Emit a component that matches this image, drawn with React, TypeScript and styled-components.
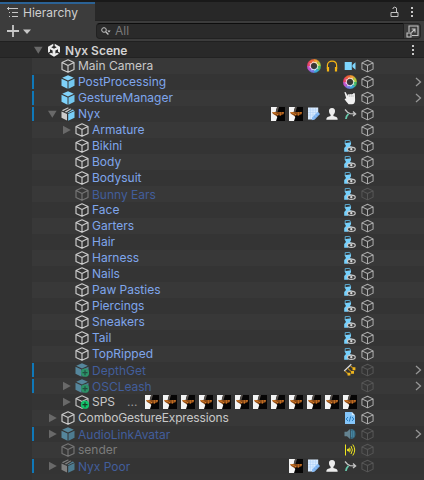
import React from "react";
import styled, { createGlobalStyle } from "styled-components";

const Global = createGlobalStyle`
  * { box-sizing: border-box; }
  html, body { margin: 0; background: #383838; }
  body { font-family: Inter, "Liberation Sans", sans-serif; overflow: hidden; }
  svg { display: block; flex: none; }
`;

const Panel = styled.div`
  width: 424px;
  height: 480px;
  display: flex;
  flex-direction: column;
  background: #383838;
  overflow: hidden;
`;

const TabBar = styled.div`
  height: 21px;
  flex: none;
  display: flex;
  align-items: flex-end;
  background: linear-gradient(#191919 2px, #282828 2px, #282828 20px, #232323 20px);
`;

const Tab = styled.div`
  width: 95px;
  height: 19px;
  display: flex;
  align-items: center;
  gap: 4px;
  padding: 1px 0 0 7px;
  border-top: 2px solid #2b6295;
  background: #3c3c3c;
  color: #cfcfcf;
  font-size: 12px;
  line-height: 16px;
`;

const TabTools = styled.div`
  margin-left: auto;
  height: 19px;
  display: flex;
  align-items: center;
  gap: 11px;
  padding-right: 10px;
`;

const Toolbar = styled.div`
  height: 20px;
  flex: none;
  display: flex;
  align-items: center;
  padding: 0 3px 0 7px;
  background: #3c3c3c;
`;

const AddButton = styled.div`
  width: 89px;
  display: flex;
  align-items: center;
  gap: 4px;
`;

const Search = styled.div`
  flex: 1;
  height: 16px;
  display: flex;
  align-items: center;
  padding-left: 4px;
  border: 1px solid #212121;
  border-top-color: #0d0d0d;
  border-radius: 4px 0 0 4px;
  background: #2a2a2a;
  color: #7a7a7a;
  font-size: 12px;
  line-height: 14px;
`;

const SearchText = styled.span`
  margin-left: 4px;
`;

const PickerButton = styled.div`
  width: 17px;
  height: 16px;
  display: flex;
  align-items: center;
  justify-content: center;
  border: 1px solid #242424;
  border-left: 0;
  border-radius: 0 4px 4px 0;
  background: #3c3c3c;
`;

const SceneRow = styled.div`
  height: 17px;
  flex: none;
  display: flex;
  align-items: center;
  padding: 1px 9px 0 32px;
  border-top: 1px solid #202020;
  border-bottom: 1px solid #222;
  background: #292929;
`;

const SceneLogo = styled.svg`
  margin-left: 4px;
`;

const SceneTitle = styled.span`
  flex: 1;
  margin-left: 4px;
  color: #d2d2d2;
  font-size: 12px;
  font-weight: 600;
  line-height: 15px;
`;

const Tree = styled.div`
  flex: 1;
  padding-left: 32px;
  background: linear-gradient(90deg, #323232 32px, #353535 32px);
`;

const Row = styled.div<{ $even: boolean; $bar: boolean; $depth: number }>`
  height: 16px;
  display: flex;
  align-items: center;
  padding-left: ${(p) => 14 + p.$depth * 14}px;
  background-color: ${(p) => (p.$even ? "#383838" : "#343434")};
  background-image: ${(p) => (p.$bar ? "linear-gradient(#0f78b8, #0f78b8)" : "none")};
  background-size: 2px 14px;
  background-position: 0 1px;
  background-repeat: no-repeat;
`;

const Fold = styled.div`
  width: 15px;
  flex: none;
`;

const TONES = { normal: "#c8c8c8", prefab: "#7fa6ec", offPrefab: "#425e9c", off: "#7b7b7b" };
type Tone = keyof typeof TONES;

const Name = styled.span<{ $tone: Tone; $tight: boolean }>`
  flex: 1;
  min-width: 0;
  margin-left: 3px;
  padding-top: ${(p) => (p.$tone === "offPrefab" ? 2 : 0)}px;
  color: ${(p) => TONES[p.$tone]};
  font-size: 12px;
  letter-spacing: ${(p) => (p.$tight ? "-0.16px" : "0")};
  line-height: 16px;
  white-space: nowrap;
`;

const Dots = styled.span`
  margin-left: 12px;
  color: #999;
`;

const Components = styled.div`
  display: flex;
  align-items: center;
  gap: 4px;
  margin-right: 4px;
`;

const Trailing = styled.div`
  width: 63px;
  flex: none;
  display: flex;
  align-items: center;
  justify-content: space-between;
  padding-right: 2px;
`;

const Cube = ({ c = "#c4c4c4", w = 1.15, size = 14 }: { c?: string; w?: number; size?: number }) => (
  <svg width={size} height={14} viewBox="0 0 14 14" fill="none" stroke={c} strokeWidth={w} strokeLinejoin="round">
    <path d="M7 .8 13 3.6V10.4L7 13.3 1 10.4V3.6ZM1 3.6 7 6.5 13 3.6M7 6.5V13.3" />
  </svg>
);

const Plus = ({ off }: { off?: boolean }) => (
  <g>
    <circle cx="10" cy="9.7" r="4.1" fill={off ? "#2c9268" : "#12c36b"} />
    <path d="M7.5 9.7H12.5M10 7.2V12.2" stroke={off ? "#224e40" : "#173c28"} strokeWidth="1.2" />
  </g>
);

const Prefab = ({ off, plus }: { off?: boolean; plus?: boolean }) => (
  <svg width="14" height="14" viewBox="0 0 14 14">
    <path d="M7 .3 12.8 2.8 7 5.5 1.2 2.8Z" fill={off ? "#55869c" : "#82d3fa"} />
    <path d="M.5 3.7 6.5 6.5V13.7L.5 10.8Z" fill={off ? "#55869c" : "#7ed2fa"} />
    <path d="M7.5 6.5 13.5 3.7V10.8L7.5 13.7Z" fill={off ? "#4d7b90" : "#73c7ef"} />
    {plus && <Plus off={off} />}
  </svg>
);

const AddedCube = () => (
  <svg width="14" height="14" viewBox="0 0 14 14" fill="none">
    <path d="M7 .8 13 3.6V10.4L7 13.3 1 10.4V3.6ZM1 3.6 7 6.5 13 3.6" stroke="#c4c4c4" strokeWidth="1.15" strokeLinejoin="round" />
    <Plus />
  </svg>
);

const Variant = ({ off }: { off?: boolean }) => (
  <svg width="14" height="14" viewBox="0 0 14 14">
    <path d="M.5 4.4 6 7V13.5L.5 10.8Z" fill={off ? "#808080" : "#cbcbcb"} />
    <path d="M.8 3.3 6.8 .5 8 1 2.3 4ZM3.6 4.7 9.3 1.6 10.5 2.1 5.1 5.4Z" fill={off ? "#808080" : "#cbcbcb"} />
    <path d="M7.2 7 13.5 4V10.8L7.2 13.7Z" fill={off ? "#4d7b90" : "#78cef8"} />
    <path d="M6.3 5.9 11.6 2.5 13.3 3.2 7.1 6.2Z" fill={off ? "#55869c" : "#82d3fa"} />
  </svg>
);

const Arrow = ({ open }: { open?: boolean }) => (
  <svg width="11" height="14" viewBox="0 0 11 14">
    <path d={open ? "M2 3.7H10.6L6.3 10.8Z" : "M3 2.8 10.8 7 3 11.3Z"} fill="#696969" />
  </svg>
);

const Chevron = () => (
  <svg width="7" height="10" viewBox="0 0 7 10" fill="none" stroke="#969696" strokeWidth="1.3">
    <path d="M1 1 5.5 5 1 9" />
  </svg>
);

const Kebab = () => (
  <svg width="4" height="12" viewBox="0 0 4 12" fill="#c8c8c8">
    <path d="M1 1h2v2H1ZM1 5h2v2H1ZM1 9h2v2H1Z" />
  </svg>
);

const Script = () => (
  <svg width="14" height="14" viewBox="0 0 14 14">
    <path d="M0 0H14V14H0Z" fill="#060505" />
    <path d="M0 0H6.2L5 3.6 4.6 6 5 8.5 6.3 10 5 14H0Z" fill="#f4f4f4" />
    <path d="M6 0H8L6.5 5H4.8Z" fill="#55504c" />
    <path d="M1.2 5 13.2 5 12.6 7.3 10.6 8 9.5 8.7 7.5 8.2 5.5 8.9 3.4 7.8 1.8 6.8Z" fill="#8a4a17" />
    <path d="M1.8 5.6 5.5 6.4M5.8 7.6H7M8.8 6H10M11 5.9H12.6M9 7.8H10" stroke="#e2862d" strokeWidth="1" />
  </svg>
);

const WHEEL = ["#f0a030", "#b4c83c", "#45b96a", "#3aa9d8", "#7378e0", "#c255cf", "#ea4468", "#ee6338"];

const Wheel = () => (
  <svg width="14" height="14" viewBox="0 0 14 14">
    {WHEEL.map((c, i) => (
      <path key={c} d="M7 .2A6.8 6.8 0 0 1 11.9 2.2L9.3 4.7A3.2 3.2 0 0 0 7 3.8Z" fill={c} stroke={c} strokeWidth=".3" transform={`rotate(${i * 45} 7 7)`} />
    ))}
    {WHEEL.map((c, i) => (
      <path key={c} d="M5 3.8 10 3.2" stroke="#f2eeee" strokeWidth=".7" transform={`rotate(${i * 45} 7 7)`} />
    ))}
    <circle cx="7" cy="7" r="2.8" fill="#383838" />
  </svg>
);

const Headphones = () => (
  <svg width="14" height="14" viewBox="0 0 14 14" fill="none" stroke="#f4b414">
    <path d="M2.4 10V6.2C2.4 .7 11.6 .7 11.6 6.2V10" strokeWidth="1.2" />
    <path d="M3 8V12.5M11 8V12.5" strokeWidth="2.2" />
  </svg>
);

const Camera = () => (
  <svg width="14" height="14" viewBox="0 0 14 14" fill="#7fd6fd">
    <path d="M1.7 3H8.8V11H1.7ZM9.4 6 12.5 3.3V10.7L9.4 8Z" />
  </svg>
);

const Hand = () => (
  <svg width="14" height="14" viewBox="0 0 14 14">
    <path d="M1.4 1.3Q2.6 .7 3.1 1.9L4.6 5 4.7 3.6Q5.5 2.8 6.3 3.6 7.2 2.7 8.1 3.5 9 2.7 9.9 3.3L10.3 2.2Q11.4 1.6 11.9 2.7L12.1 9Q12 13.2 9 13.2H5.6L3.2 10.5 1.6 8.3Q2 7.3 3.3 7.6Z" fill="#f1f1f1" />
    <path d="M6.3 4V6M8.2 4V6M10 4V6" stroke="#999" strokeWidth=".5" />
  </svg>
);

const Note = () => (
  <svg width="14" height="14" viewBox="0 0 14 14">
    <path d="M1 .5H11.2V8L7 12.5H1Z" fill="#d9ebff" />
    <path d="M1 3H11M1 5.5H11M1 8H10M3.5 1V12M6 1V12M8.5 1V10" stroke="#a9cdf4" strokeWidth=".5" />
    <path d="M5.1 10.5 10.8 4.8 13 7 7.7 12.5 4.8 13.3Z" fill="#87baf3" />
    <path d="M7 9.3 9 11.2M9 7.3 11 9.2" stroke="#629ce0" strokeWidth=".6" />
  </svg>
);

const Person = () => (
  <svg width="14" height="14" viewBox="0 0 14 14" fill="#ececec">
    <path d="M7 1C9.2 1 10.2 2.4 10 4.5 9.8 6.2 9.1 7.1 8.4 7.8V9L11.4 10Q12.7 10.5 12.7 12.7H1.3Q1.3 10.5 2.6 10L5.6 9V7.8C4.9 7.1 4.2 6.2 4 4.5 3.8 2.4 4.8 1 7 1Z" />
  </svg>
);

const Bone = () => (
  <svg width="14" height="14" viewBox="0 0 14 14" fill="none">
    <path d="M2 2.5 4.5 5.3 7 6.6 12 6.9M10 4.6 12.6 6.9 10 9" stroke="#c4c4c4" strokeWidth="1.3" />
    <path d="M5.5 6.8Q3.4 8.5 2.9 12" stroke="#68c9ac" strokeWidth="1.7" />
  </svg>
);

const Mesh = () => (
  <svg width="14" height="14" viewBox="0 0 14 14">
    <path d="M2.2 4.2V1.6L6.7 1.4 7.6 3.4" stroke="#5fb3dc" strokeWidth=".9" fill="none" />
    <path d="M1.5 4.2 8 3.3 8 5.2 7 7 9 8 4.8 12.8H1.2V9L3 7Z" fill="#76d0fc" />
    <ellipse cx="8.3" cy="10.3" rx="3.9" ry="2.1" fill="#333" stroke="#c8c8c8" strokeWidth="1.2" />
    <circle cx="8.3" cy="10.1" r="1.2" fill="#dadada" />
  </svg>
);

const Constraint = () => (
  <svg width="14" height="14" viewBox="0 0 14 14" fill="none">
    <path d="M1.2 8 8.3 1.2" stroke="#ddd" strokeWidth="1.2" />
    <path d="M7.5 2.8 11.5 6.5M4.7 5.3 9.8 9.8M2 7.8 6.3 12" stroke="#bf8b16" strokeWidth="1.1" />
    <path d="M10 4.2H12.4V7.2H9.4ZM8.1 8H11V10.8H8ZM4.7 9.8H7.4V12.5H4.5Z" fill="#eeb51e" />
  </svg>
);

const CodeFile = () => (
  <svg width="14" height="14" viewBox="0 0 14 14" fill="none">
    <path d="M2 1H8.8L12 4.3V13H2Z" fill="#85c6fa" />
    <path d="M8.8 1V4.3H12" fill="#d6edff" />
    <path d="M5 6 3.2 8 5 10M9 6 10.8 8 9 10M7.7 5.4 6.3 10.6" stroke="#1772b8" strokeWidth=".9" />
  </svg>
);

const Speaker = () => (
  <svg width="14" height="14" viewBox="0 0 14 14" fill="none">
    <path d="M1.5 4.7H4L7 2V12L4 9.3H1.5Z" fill="#648391" />
    <path d="M7.5 2Q12.5 2 12.5 7T7.5 12Z" fill="#386b83" />
    <path d="M8.4 4V10M10.3 4V10" stroke="#4c8fab" strokeWidth=".8" />
  </svg>
);

const Signal = () => (
  <svg width="14" height="14" viewBox="0 0 14 14" fill="none" stroke="#eee51f" strokeWidth="1">
    <path d="M2.5 1.5V12.5M6.5 4.7Q8 7 6.5 9.3M8 3Q10.8 7 8 11M9.8 1.5Q13.6 7 9.8 12.5" />
    <circle cx="5.3" cy="7" r="1" fill="#eee51f" />
  </svg>
);

const ICONS = {
  script: Script, wheel: Wheel, headphones: Headphones, camera: Camera, hand: Hand, note: Note,
  person: Person, bone: Bone, mesh: Mesh, constraint: Constraint, code: CodeFile, speaker: Speaker, signal: Signal,
};
type IconName = keyof typeof ICONS;

interface Item {
  name: string;
  kind?: "cube" | "prefab" | "variant" | "added" | "prefabAdded";
  tone?: Tone;
  depth?: number;
  fold?: "open" | "closed";
  bar?: boolean;
  comps?: IconName[];
  chevron?: boolean;
  truncated?: boolean;
  tight?: boolean;
}

const part = (name: string, tone: Tone = "prefab"): Item => ({ name, tone, depth: 1, comps: ["mesh"] });

const ITEMS: Item[] = [
  { name: "Main Camera", comps: ["wheel", "headphones", "camera"] },
  { name: "PostProcessing", kind: "prefab", tone: "prefab", bar: true, comps: ["wheel"], chevron: true },
  { name: "GestureManager", kind: "prefab", tone: "prefab", bar: true, comps: ["hand"], chevron: true },
  { name: "Nyx", kind: "variant", tone: "prefab", bar: true, fold: "open", comps: ["script", "script", "note", "person", "bone"] },
  { name: "Armature", tone: "prefab", depth: 1, fold: "closed" },
  part("Bikini"), part("Body"), part("Bodysuit"), part("Bunny Ears", "offPrefab"), part("Face"),
  part("Garters"), part("Hair"), part("Harness"), part("Nails"), part("Paw Pasties"),
  part("Piercings"), part("Sneakers"), part("Tail"), part("TopRipped"),
  { name: "DepthGet", kind: "prefabAdded", tone: "offPrefab", depth: 1, bar: true, comps: ["constraint"], chevron: true },
  { name: "OSCLeash", kind: "prefabAdded", tone: "offPrefab", depth: 1, bar: true, fold: "closed", chevron: true },
  { name: "SPS", kind: "added", depth: 1, fold: "closed", truncated: true, comps: Array<IconName>(12).fill("script") },
  { name: "ComboGestureExpressions", fold: "closed", comps: ["code"], tight: true },
  { name: "AudioLinkAvatar", kind: "prefab", tone: "offPrefab", bar: true, fold: "closed", comps: ["speaker"], chevron: true },
  { name: "sender", tone: "off", comps: ["signal"] },
  { name: "Nyx Poor", kind: "variant", tone: "offPrefab", bar: true, fold: "closed", comps: ["script", "note", "person", "bone"] },
];

const ObjectIcon = ({ kind = "cube", off }: { kind?: Item["kind"]; off: boolean }) => {
  if (kind === "prefab") return <Prefab off={off} />;
  if (kind === "prefabAdded") return <Prefab off={off} plus />;
  if (kind === "variant") return <Variant off={off} />;
  if (kind === "added") return <AddedCube />;
  return <Cube c={off ? "#757575" : "#cdcdcd"} />;
};

const TreeRow = ({ item, index }: { item: Item; index: number }) => {
  const tone = item.tone ?? "normal";
  const off = tone === "off" || tone === "offPrefab";
  return (
    <Row $even={index % 2 === 0} $bar={!!item.bar} $depth={item.depth ?? 0}>
      <Fold>{item.fold && <Arrow open={item.fold === "open"} />}</Fold>
      <ObjectIcon kind={item.kind} off={off} />
      <Name $tone={tone} $tight={!!item.tight}>
        {item.name}
        {item.truncated && <Dots>...</Dots>}
      </Name>
      <Components>
        {item.comps?.map((c, i) => {
          const Icon = ICONS[c];
          return <Icon key={i} />;
        })}
      </Components>
      <Trailing>
        <Cube c={off ? "#565656" : "#adadad"} size={13} w={1.1} />
        {item.chevron && <Chevron />}
      </Trailing>
    </Row>
  );
};

export default function App() {
  return (
    <Panel>
      <Global />
      <TabBar>
        <Tab>
          <svg width="12" height="12" viewBox="0 0 12 12" stroke="#c8c8c8" fill="none">
            <path d="M3 1.5H11M5 5.5H11M5 9.5H11M1.5 0V3M0 1.5H3M2.5 5V6M2.5 9V10" />
          </svg>
          Hierarchy
        </Tab>
        <TabTools>
          <svg width="9" height="12" viewBox="0 0 9 12" stroke="#c4c4c4" fill="none">
            <path d="M1 6.5H8V10.5H1ZM3 3V2Q4.7 .2 6.5 2V6.5" />
          </svg>
          <Kebab />
        </TabTools>
      </TabBar>
      <Toolbar>
        <AddButton>
          <svg width="12" height="12" viewBox="0 0 12 12" stroke="#c8c8c8" strokeWidth="1.8">
            <path d="M0 6H12M6 0V12" />
          </svg>
          <svg width="8" height="5" viewBox="0 0 8 5" fill="#c8c8c8">
            <path d="M0 .5H8L4 5Z" />
          </svg>
        </AddButton>
        <Search>
          <svg width="10" height="10" viewBox="0 0 10 10" stroke="#c4c4c4" fill="none">
            <circle cx="3" cy="4" r="2.3" />
            <path d="M4.7 5.8 7.4 8.5" strokeWidth="1.3" />
            <path d="M6.3 4.6H9.7L8 6.5Z" fill="#c4c4c4" stroke="none" />
          </svg>
          <SearchText>All</SearchText>
        </Search>
        <PickerButton>
          <svg width="13" height="13" viewBox="0 0 13 13" stroke="#c4c4c4" fill="none" strokeWidth="1.1">
            <path d="M3 7V1H12V10.5H6M1 8H5V12H1ZM5.5 7.5 9 4M5.7 4H9V7.5" />
          </svg>
        </PickerButton>
      </Toolbar>
      <SceneRow>
        <Arrow open />
        <SceneLogo width="14" height="14" viewBox="0 0 14 14">
          <path d="M6.3 .7V3L4.3 4.2 7 5.7 9.7 4.2 7.7 3V.7L13 3.8V9.8L11 8.7V6.2L8.4 7.6V10.6L10 9.7 12 10.8 7 13.7 2 10.8 4 9.7 5.6 10.6V7.6L3 6.2V8.7L1 9.8V3.8Z" fill="#ececec" />
        </SceneLogo>
        <SceneTitle>Nyx Scene</SceneTitle>
        <Kebab />
      </SceneRow>
      <Tree>
        {ITEMS.map((item, i) => (
          <TreeRow key={item.name} item={item} index={i} />
        ))}
      </Tree>
    </Panel>
  );
}
